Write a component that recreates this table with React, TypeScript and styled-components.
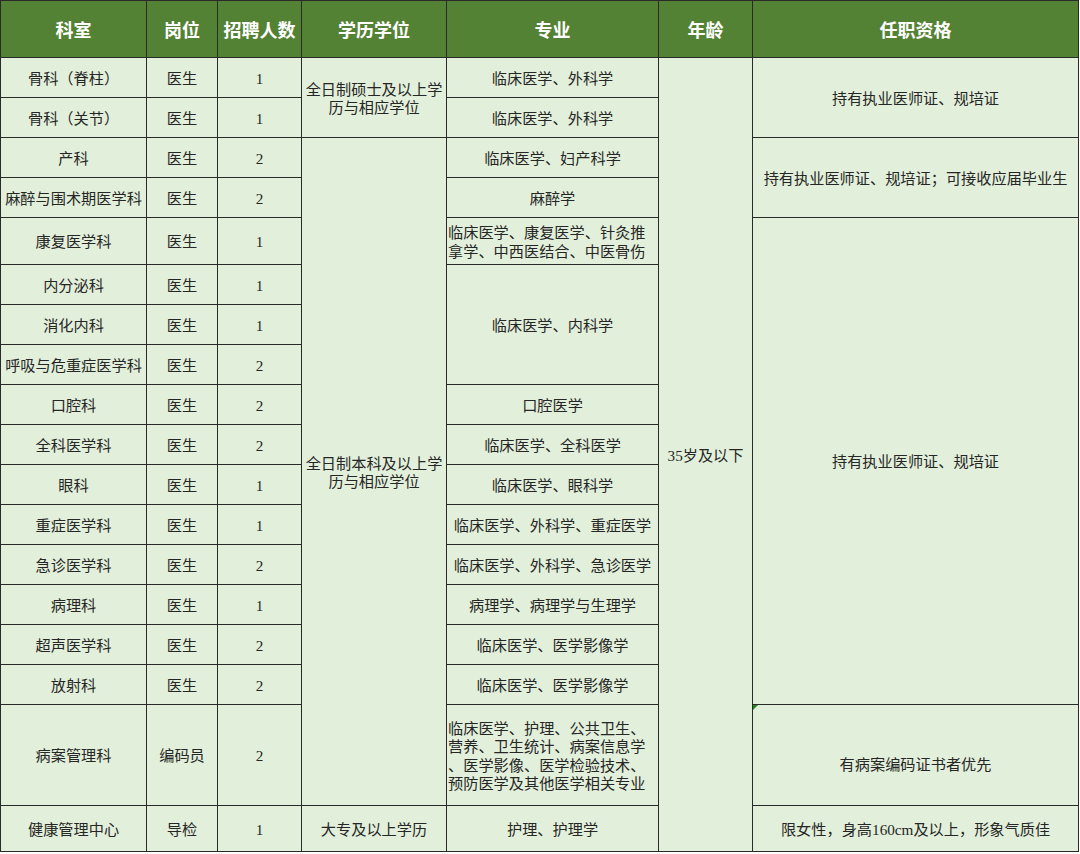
import React from "react";
import styled, { createGlobalStyle, css } from "styled-components";

const Global = createGlobalStyle`
  html, body { margin: 0; padding: 0; background: #ffffff; }
  body { font-family: "Liberation Serif", "Noto Sans CJK SC", serif; }
`;

const Sheet = styled.div`
  display: grid;
  width: 1079px;
  grid-template-columns: 145px 70px 83px 144px 211px 93px 325px;
  grid-template-rows: 56px 39px 39px 39px 39px 46px repeat(11, 39px) 100px 45px;
  gap: 1px;
  padding: 1px;
  box-sizing: border-box;
  background: #2a2a2a;
`;

const HeadCell = styled.div`
  display: flex;
  align-items: center;
  justify-content: center;
  background: #548235;
  color: #ffffff;
  font-family: "Noto Sans CJK SC", sans-serif;
  font-weight: 700;
  font-size: 18px;
  white-space: nowrap;
`;

const Cell = styled.div<{ $rows?: number; $left?: boolean; $flag?: boolean; $drop?: number }>`
  position: relative;
  display: flex;
  align-items: center;
  justify-content: ${(p) => (p.$left ? "flex-start" : "center")};
  text-align: ${(p) => (p.$left ? "left" : "center")};
  padding: ${(p) => 3 + (p.$drop ?? 0)}px 0 0 ${(p) => (p.$left ? 1 : 0)}px;
  box-sizing: border-box;
  background: #e2efda;
  color: #262626;
  font-size: 15.2px;
  line-height: 18.5px;
  white-space: nowrap;
  grid-row: span ${(p) => p.$rows ?? 1};
  ${(p) =>
    p.$flag &&
    css`
      &::before {
        content: "";
        position: absolute;
        left: 0;
        top: 0;
        border-top: 5px solid #1e8a1e;
        border-right: 5px solid transparent;
      }
    `}
`;

const headers = ["科室", "岗位", "招聘人数", "学历学位", "专业", "年龄", "任职资格"];

export default function App() {
  const base = (dept: string, post: string, n: string) => [
    <Cell key={dept + "d"}>{dept}</Cell>,
    <Cell key={dept + "p"}>{post}</Cell>,
    <Cell key={dept + "n"}>{n}</Cell>,
  ];
  return (
    <>
      <Global />
      <Sheet>
        {headers.map((h) => (
          <HeadCell key={h}>{h}</HeadCell>
        ))}

        {base("骨科（脊柱）", "医生", "1")}
        <Cell $rows={2}>
          全日制硕士及以上学
          <br />
          历与相应学位
        </Cell>
        <Cell>临床医学、外科学</Cell>
        <Cell $rows={18}>35岁及以下</Cell>
        <Cell $rows={2}>持有执业医师证、规培证</Cell>

        {base("骨科（关节）", "医生", "1")}
        <Cell>临床医学、外科学</Cell>

        {base("产科", "医生", "2")}
        <Cell $rows={15}>
          全日制本科及以上学
          <br />
          历与相应学位
        </Cell>
        <Cell>临床医学、妇产科学</Cell>
        <Cell $rows={2}>持有执业医师证、规培证；可接收应届毕业生</Cell>

        {base("麻醉与围术期医学科", "医生", "2")}
        <Cell>麻醉学</Cell>

        {base("康复医学科", "医生", "1")}
        <Cell $left>
          临床医学、康复医学、针灸推
          <br />
          拿学、中西医结合、中医骨伤
        </Cell>
        <Cell $rows={12}>持有执业医师证、规培证</Cell>

        {base("内分泌科", "医生", "1")}
        <Cell $rows={3}>临床医学、内科学</Cell>

        {base("消化内科", "医生", "1")}
        {base("呼吸与危重症医学科", "医生", "2")}

        {base("口腔科", "医生", "2")}
        <Cell>口腔医学</Cell>

        {base("全科医学科", "医生", "2")}
        <Cell>临床医学、全科医学</Cell>

        {base("眼科", "医生", "1")}
        <Cell>临床医学、眼科学</Cell>

        {base("重症医学科", "医生", "1")}
        <Cell>临床医学、外科学、重症医学</Cell>

        {base("急诊医学科", "医生", "2")}
        <Cell>临床医学、外科学、急诊医学</Cell>

        {base("病理科", "医生", "1")}
        <Cell>病理学、病理学与生理学</Cell>

        {base("超声医学科", "医生", "2")}
        <Cell>临床医学、医学影像学</Cell>

        {base("放射科", "医生", "2")}
        <Cell>临床医学、医学影像学</Cell>

        {base("病案管理科", "编码员", "2")}
        <Cell $left>
          临床医学、护理、公共卫生、
          <br />
          营养、卫生统计、病案信息学
          <br />
          、医学影像、医学检验技术、
          <br />
          预防医学及其他医学相关专业
        </Cell>
        <Cell $flag $drop={18}>有病案编码证书者优先</Cell>

        {base("健康管理中心", "导检", "1")}
        <Cell>大专及以上学历</Cell>
        <Cell>护理、护理学</Cell>
        <Cell>限女性，身高160cm及以上，形象气质佳</Cell>
      </Sheet>
    </>
  );
}
